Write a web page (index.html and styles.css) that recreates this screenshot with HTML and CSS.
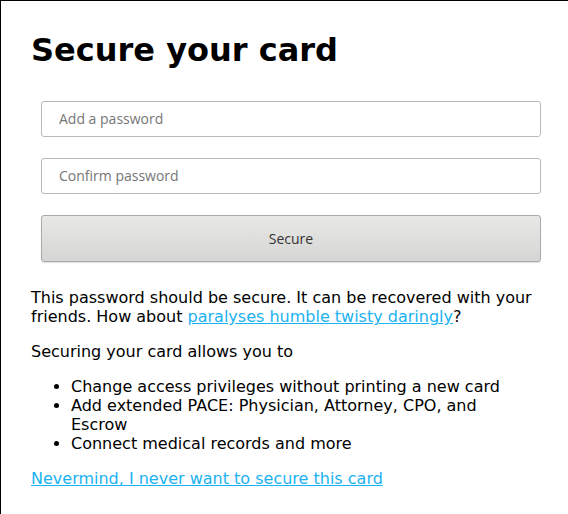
FILE: index.html
```html
<!DOCTYPE html>
<html lang="en">
<head>
<meta charset="utf-8">
<title>Secure your card</title>
<link rel="stylesheet" href="styles.css">
</head>
<body>
<div class="page">
  <div class="content">
    <h1 class="title">Secure your card</h1>
    <form class="secure-form">
      <input class="field" type="password" placeholder="Add a password">
      <input class="field" type="password" placeholder="Confirm password">
      <button class="btn" type="button">Secure</button>
    </form>
    <p class="text">This password should be secure. It can be recovered with your friends. How about <a class="link" href="#">paralyses humble twisty daringly</a>?</p>
    <p class="text">Securing your card allows you to</p>
    <ul class="perks">
      <li>Change access privileges without printing a new card</li>
      <li>Add extended PACE: Physician, Attorney, CPO, and Escrow</li>
      <li>Connect medical records and more</li>
    </ul>
    <p class="text"><a class="link" href="#">Nevermind, I never want to secure this card</a></p>
  </div>
</div>
</body>
</html>
```
FILE: styles.css
```css
html, body {
  margin: 0;
  padding: 0;
  background: #fff;
}

body {
  font-family: "DejaVu Sans", sans-serif;
  font-size: 16px;
  color: #000;
}

.page {
  border-top: 1px solid #000;
  border-left: 1px solid #000;
  padding: 30px;
}

.content {
  max-width: 505px;
}

.title {
  margin: 0 0 21.44px;
  font-size: 32px;
  font-weight: bold;
}

.secure-form {
  display: flex;
  flex-direction: column;
  gap: 21px;
  padding: 11px 0 10px 10px;
  margin: 0;
}

.field {
  box-sizing: border-box;
  width: 500px;
  height: 36px;
  margin: 0;
  padding: 0 17px 1px;
  border: 1px solid #b9b9b9;
  border-radius: 3px;
  font-family: "Open Sans", sans-serif;
  font-size: 14px;
  color: #333;
  background: #fff;
  outline: none;
}

.field::placeholder {
  color: #767676;
}

.btn {
  box-sizing: border-box;
  width: 500px;
  height: 47px;
  margin: 0;
  border: 1px solid #aaa;
  border-radius: 3px;
  background: linear-gradient(#e8e8e7, #d5d5d4);
  box-shadow: 0 1px 1px rgba(0, 0, 0, 0.12);
  font-family: "Open Sans", sans-serif;
  font-size: 14px;
  color: #333;
}

.text {
  margin: 16px 0;
}

.perks {
  margin: 16px 0;
  padding-left: 40px;
}

.link {
  color: #1ab2f2;
}
```
